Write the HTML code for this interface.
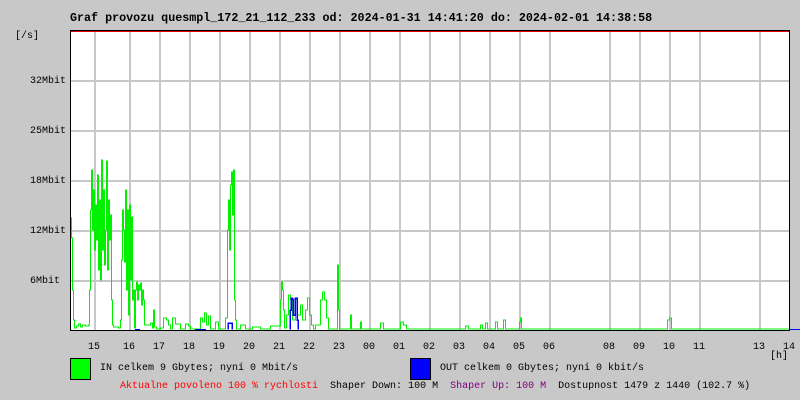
<!DOCTYPE html>
<html><head><meta charset="utf-8"><style>
body{margin:0;width:800px;height:400px;background:#c8c8c8;overflow:hidden;position:relative;font-family:"Liberation Mono","DejaVu Sans Mono",monospace;}
.t{position:absolute;white-space:pre;font-size:10px;line-height:12px;color:#000;}
</style></head><body>
<div class="t" style="left:70px;top:11px;font-size:11.7px;font-weight:bold;line-height:14px">Graf provozu quesmpl_172_21_112_233 od: 2024-01-31 14:41:20 do: 2024-02-01 14:38:58</div>
<div class="t" style="left:15px;top:31px">[/s]</div>
<div class="t" style="left:30px;top:76px">32Mbit</div>
<div class="t" style="left:30px;top:126px">25Mbit</div>
<div class="t" style="left:30px;top:176px">18Mbit</div>
<div class="t" style="left:30px;top:226px">12Mbit</div>
<div class="t" style="left:30px;top:276px">6Mbit</div>
<svg style="position:absolute;left:0;top:0" width="800" height="400" shape-rendering="crispEdges">
<rect x="70" y="31" width="720" height="299" fill="#fff"/>
<g stroke="#c8c8c8" stroke-width="2">
<path d="M95 31V330M130 31V330M160 31V330M190 31V330M220 31V330M250 31V330M280 31V330M310 31V330M340 31V330M370 31V330M400 31V330M430 31V330M460 31V330M490 31V330M520 31V330M550 31V330M610 31V330M640 31V330M670 31V330M700 31V330M760 31V330"/>
<path d="M70 81H790M70 131H790M70 181H790M70 231H790M70 281H790"/>
</g>
<path fill="none" stroke="#00f000" stroke-width="1" d="M70.5 329V218H71.5V238H72.5V290H73.5V320H74.5V328H76.5V326H78.5V324H80.5V327H82.5V325H85.5V326H88.5V325H89.5V290H90.5V210H91.5V170H92.5V230H93.5V190H94.5V250H95.5V205H96.5V240H97.5V175H98.5V270H99.5V200H100.5V280H101.5V160H102.5V250H103.5V190H104.5V265H105.5V230H106.5V161H107.5V270H108.5V200H109.5V240H110.5V215H111.5V300H112.5V325H113.5V327H118.5V328H120.5V320H121.5V260H122.5V210H123.5V230H124.5V262H125.5V190H126.5V290H127.5V210H128.5V315H129.5V205H130.5V280H131.5V217H132.5V300H133.5V290H134.5V328H135.5V290H136.5V282H137.5V300H138.5V285H139.5V290H140.5V283H141.5V305H142.5V290H143.5V300H144.5V325H150.5V323H152.5V328H153.5V310H154.5V327H156.5V329H160.5V328H163.5V318H166.5V320H168.5V325H170.5V329H172.5V318H175.5V324H180.5V329H185.5V324H188.5V326H190.5V329H200.5V318H202.5V322H204.5V313H206.5V325H208.5V316H210.5V329H215.5V322H218.5V329H225.5V318H227.5V230H228.5V200H229.5V250H230.5V185H231.5V172H232.5V215H233.5V170H234.5V300H235.5V320H236.5V329H240.5V325H245.5V329H252.5V327H260.5V329H270.5V326H280.5V300H281.5V282H282.5V290H283.5V310H284.5V328H286.5V315H288.5V295H290.5V300H292.5V320H295.5V300H297.5V315H300.5V305H302.5V320H305.5V310H307.5V298H309.5V315H311.5V325H313.5V329H315.5V325H317.5V325H320.5V300H322.5V292H324.5V300H326.5V318H328.5V329H337.5V265H338.5V310H339.5V329H350.5V315H351.5V329H360.5V322H361.5V329H380.5V323H383.5V329H400.5V322H403.5V325H406.5V329H465.5V326H468.5V329H480.5V325H482.5V329H485.5V323H487.5V329H495.5V322H497.5V329H503.5V320H505.5V329H519.5V322H520.5V318H521.5V329H667.5V320H669.5V318H671.5V329H790"/>
<path fill="none" stroke="#0000ff" stroke-width="1.5" d="M228 329.5V323H232V329.5M290 329.5V310H291V298H292V299H293V315H295V298H297V320H298V329.5M135 329.5H140M195 329.5H206"/>
<path d="M70 31.5H790" stroke="#e00000" stroke-width="1"/>
<path d="M70.5 30V331M789.5 30V331M70 330.5H790M70 30.5H790" stroke="#000" stroke-width="1"/>
<path d="M790 329.5H800" stroke="#0000ff" stroke-width="1"/>
<rect x="70.5" y="358.5" width="20" height="21" fill="#00ff00" stroke="#000"/>
<rect x="410.5" y="358.5" width="20" height="21" fill="#0000ff" stroke="#000"/>
</svg>
<div class="t" style="left:88px;top:342px">15</div>
<div class="t" style="left:123px;top:342px">16</div>
<div class="t" style="left:153px;top:342px">17</div>
<div class="t" style="left:183px;top:342px">18</div>
<div class="t" style="left:213px;top:342px">19</div>
<div class="t" style="left:243px;top:342px">20</div>
<div class="t" style="left:273px;top:342px">21</div>
<div class="t" style="left:303px;top:342px">22</div>
<div class="t" style="left:333px;top:342px">23</div>
<div class="t" style="left:363px;top:342px">00</div>
<div class="t" style="left:393px;top:342px">01</div>
<div class="t" style="left:423px;top:342px">02</div>
<div class="t" style="left:453px;top:342px">03</div>
<div class="t" style="left:483px;top:342px">04</div>
<div class="t" style="left:513px;top:342px">05</div>
<div class="t" style="left:543px;top:342px">06</div>
<div class="t" style="left:603px;top:342px">08</div>
<div class="t" style="left:633px;top:342px">09</div>
<div class="t" style="left:663px;top:342px">10</div>
<div class="t" style="left:693px;top:342px">11</div>
<div class="t" style="left:753px;top:342px">13</div>
<div class="t" style="left:783px;top:342px">14</div>
<div class="t" style="left:770px;top:351px">[h]</div>
<div class="t" style="left:100px;top:363px">IN celkem 9 Gbytes; nyní 0 Mbit/s</div>
<div class="t" style="left:440px;top:363px">OUT celkem 0 Gbytes; nyní 0 kbit/s</div>
<div class="t" style="left:120px;top:381px"><span style="color:#ff0000">Aktualne povoleno 100 % rychlosti</span>  Shaper Down: 100 M  <span style="color:#800080">Shaper Up: 100 M</span>  Dostupnost 1479 z 1440 (102.7 %)</div>
</body></html>
